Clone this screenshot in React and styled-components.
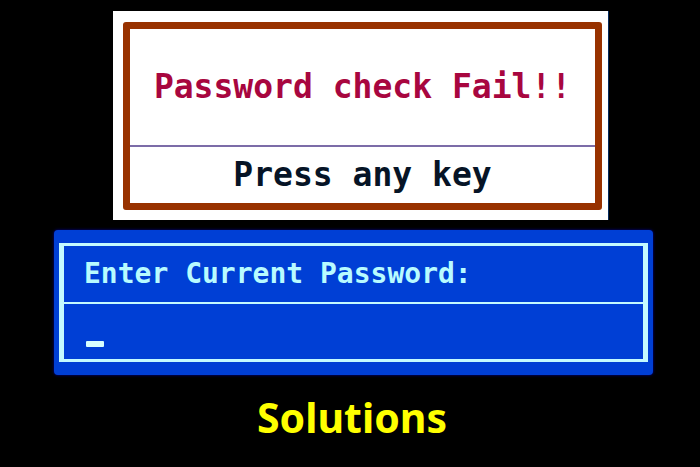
import React, { useState } from "react";
import styled, { createGlobalStyle } from "styled-components";

const GlobalStyle = createGlobalStyle`
  * {
    box-sizing: border-box;
  }
  body {
    margin: 0;
    background: #000;
  }
`;

const Screen = styled.main`
  display: flex;
  flex-direction: column;
  gap: 10px;
  min-height: 100vh;
  padding-top: 11px;
  background: #000;
  font-family: "DejaVu Sans Mono", monospace;
  font-weight: bold;
`;

const Alert = styled.section`
  margin: 0 91px 0 113px;
  padding: 11px 6px 10px 10px;
  background: #fff;
  border-right: 1px solid #062a5c;
`;

const AlertFrame = styled.div`
  border: 7px solid #983200;
  border-radius: 3px;
`;

const AlertRow = styled.p`
  display: flex;
  align-items: center;
  justify-content: center;
  height: ${(p) => p.$height}px;
  margin: 0;
  color: ${(p) => p.$color};
  font-size: 33px;
  line-height: 36px;
  white-space: pre;
`;

const Divider = styled.hr`
  height: ${(p) => p.$size}px;
  margin: 0;
  border: 0;
  background: ${(p) => p.$color};
`;

const Prompt = styled.form`
  margin: 0 47px 0 54px;
  padding: 13px 5px;
  background: #003fd5;
  border-radius: 4px;
  box-shadow: 0 0 3px #0000a0;
`;

const PromptFrame = styled.div`
  border: solid #c4faff;
  border-width: 3px 5px;
`;

const PromptLabel = styled.label`
  display: flex;
  align-items: center;
  height: 56px;
  padding-left: 20px;
  color: #b8fbff;
  font-size: 28px;
  line-height: 32px;
  white-space: pre;
`;

const Field = styled.div`
  display: flex;
  align-items: flex-end;
  height: 55px;
  padding: 0 22px 12px;
`;

const Cursor = styled.span`
  width: 18px;
  height: 6px;
  background: #d8ffff;
  border-radius: 1px;
`;

const PasswordInput = styled.input`
  width: ${(p) => p.$length * 17}px;
  flex: ${(p) => (p.$length ? "none" : "1")};
  order: ${(p) => (p.$length ? -1 : 0)};
  min-width: 0;
  height: 32px;
  padding: 0;
  border: 0;
  outline: 0;
  background: transparent;
  caret-color: transparent;
  color: #b8fbff;
  font: bold 28px "DejaVu Sans Mono", monospace;
`;

const Title = styled.h1`
  margin: 4px 0 0 4px;
  color: #ff0;
  font: 700 41px/56px "Noto Sans", sans-serif;
  text-align: center;
`;

function App() {
  const [password, setPassword] = useState("");

  return (
    <>
      <GlobalStyle />
      <Screen>
        <Alert role="alert">
          <AlertFrame>
            <AlertRow $height={116} $color="#a8063f">
              Password check Fail!!
            </AlertRow>
            <Divider $size={2} $color="#7c6ca8" />
            <AlertRow $height={56} $color="#061426">
              Press any key
            </AlertRow>
          </AlertFrame>
        </Alert>
        <Prompt onSubmit={(e) => e.preventDefault()}>
          <PromptFrame>
            <PromptLabel htmlFor="password">Enter Current Password:</PromptLabel>
            <Divider $size={2} $color="#c4faff" />
            <Field>
              <Cursor />
              <PasswordInput
                id="password"
                type="password"
                value={password}
                $length={password.length}
                onChange={(e) => setPassword(e.target.value)}
              />
            </Field>
          </PromptFrame>
        </Prompt>
        <Title>Solutions</Title>
      </Screen>
    </>
  );
}

export default App;
